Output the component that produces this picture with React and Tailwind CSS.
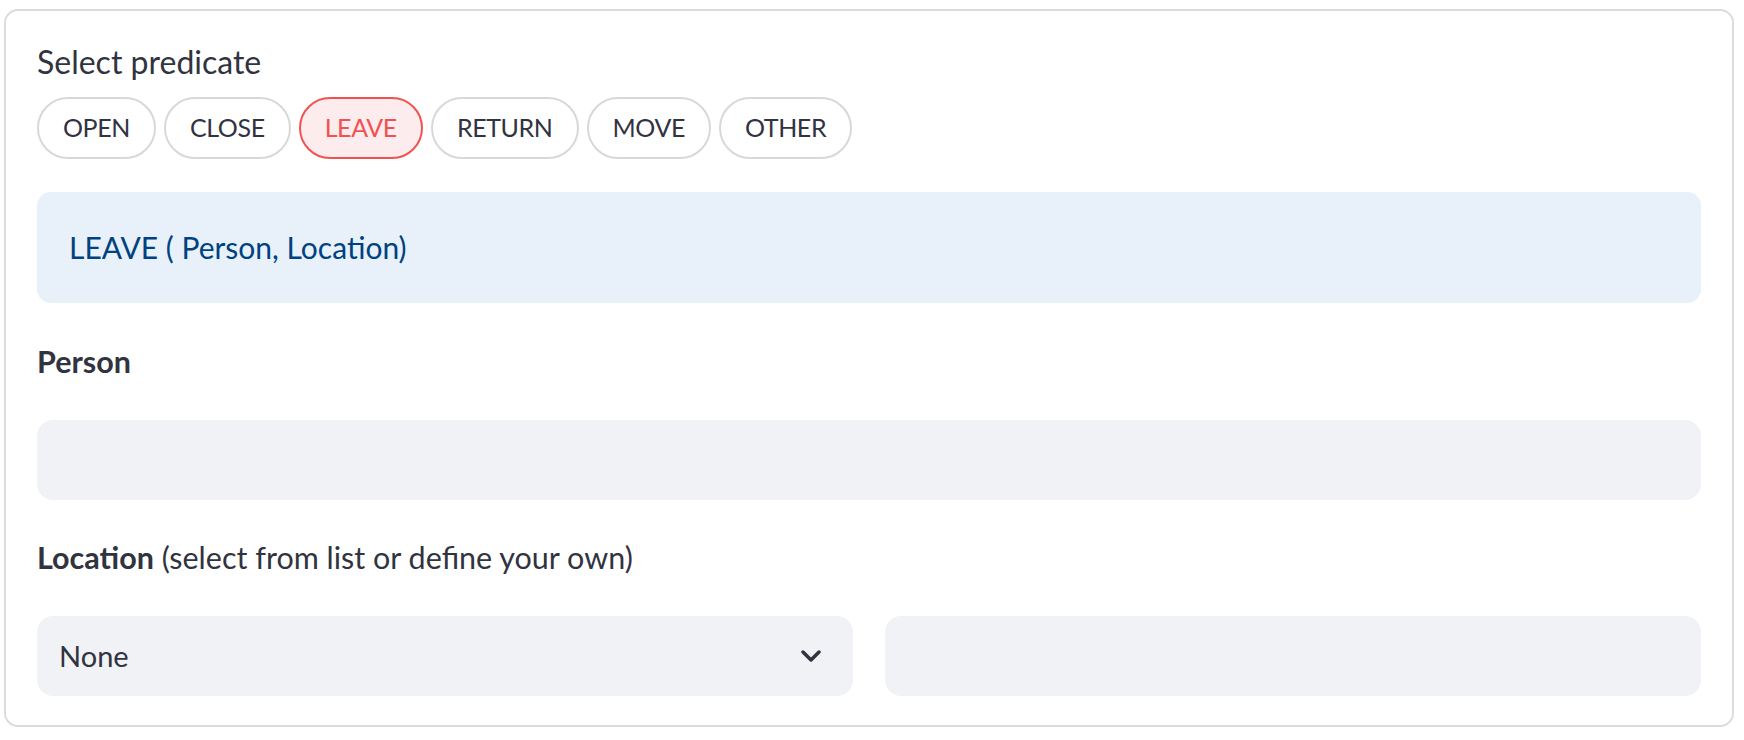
import React from 'react';

const predicates = ['OPEN', 'CLOSE', 'LEAVE', 'RETURN', 'MOVE', 'OTHER'];

const PredicateButton = ({ label, active }) => (
  <button
    className={
      active
        ? 'h-[62px] rounded-full border-2 border-[#f05252] bg-[#fdeced] px-[24px] text-[25px] tracking-[-0.4px] text-[#f05252]'
        : 'h-[62px] rounded-full border-2 border-[#d8d8db] bg-white px-[24px] text-[25px] tracking-[-0.4px] text-[#31333f]'
    }
  >
    {label}
  </button>
);

const App = () => {
  return (
    <div className="min-h-screen bg-white pt-[9px] pl-[4px] font-['Lato',sans-serif] text-[#31333f]">
      <div className="w-[1730px] rounded-[14px] border-2 border-[#dcdcdf] px-[31px] pt-[31px] pb-[29px]">
        <div className="text-[32px] leading-[40px]">Select predicate</div>

        <div className="mt-[15px] flex gap-[8px]">
          {predicates.map((p) => (
            <PredicateButton key={p} label={p} active={p === 'LEAVE'} />
          ))}
        </div>

        <div className="mt-[33px] flex h-[111px] items-center rounded-[14px] bg-[#e8f0fa] px-[32px] text-[30px] text-[#004280]">
          LEAVE ( Person, Location)
        </div>

        <div className="mt-[38px] text-[30.5px] font-bold leading-[40px]">Person</div>
        <div className="mt-[39px] h-[80px] rounded-[16px] bg-[#f0f2f6]" />

        <div className="mt-[37px] text-[30.5px] leading-[40px]">
          <span className="font-bold">Location</span> (select from list or define your own)
        </div>

        <div className="mt-[39px] grid grid-cols-2 gap-[32px]">
          <div className="flex h-[80px] items-center justify-between rounded-[16px] bg-[#f0f2f6] pl-[22px] pr-[32px]">
            <span className="text-[29px]">None</span>
            <svg width="20" height="13" viewBox="0 0 20 13" fill="none">
              <polyline
                points="2,2 10,10 18,2"
                stroke="#31333f"
                strokeWidth="3.5"
                strokeLinecap="round"
                strokeLinejoin="round"
              />
            </svg>
          </div>
          <div className="h-[80px] rounded-[16px] bg-[#f0f2f6]" />
        </div>
      </div>
    </div>
  );
};

export default App;
